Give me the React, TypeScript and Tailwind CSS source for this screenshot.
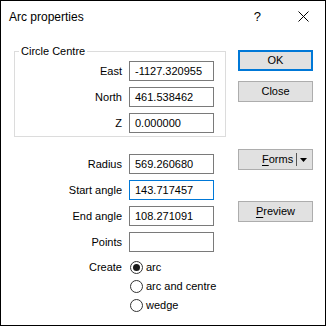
import React from "react";

const font = { fontFamily: '"Liberation Sans", Arial, sans-serif' };

function Field({ label, value, focused }: { label: string; value: string; focused?: boolean }) {
  return (
    <div className="flex items-center h-[20px]">
      <div className="w-[107px] text-right text-[11px] leading-[13px] text-black">{label}</div>
      <div
        className={
          "ml-[7px] w-[85px] h-[20px] border flex items-center pl-[5px] text-[11px] leading-[13px] text-black " +
          (focused ? "border-[#0078d7]" : "border-[#7a7a7a]")
        }
      >
        {value}
      </div>
    </div>
  );
}

function Radio({ label, checked }: { label: string; checked?: boolean }) {
  return (
    <div className="flex items-center h-[18px]">
      <div className="w-[13px] h-[13px] rounded-full border border-[#333333] bg-white flex items-center justify-center">
        {checked && <div className="w-[7px] h-[7px] rounded-full bg-[#1a1a1a]" />}
      </div>
      <span className="ml-[3px] text-[11px] leading-[13px] text-black">{label}</span>
    </div>
  );
}

function Button({ children, primary, className = "" }: { children: React.ReactNode; primary?: boolean; className?: string }) {
  return (
    <div
      className={
        "w-[75px] h-[21px] bg-[#e1e1e1] flex items-center justify-center text-[11px] leading-[13px] text-black " +
        (primary ? "border-2 border-[#0078d7] " : "border border-[#adadad] ") +
        className
      }
    >
      {children}
    </div>
  );
}

export default function App() {
  return (
    <div className="w-[326px] h-[326px] border border-black bg-white flex flex-col overflow-hidden" style={font}>
      {/* Title bar */}
      <div className="h-[31px] flex items-center pl-[8px] text-[12px] leading-[14px] text-black">
        <span>Arc properties</span>
        <span className="ml-[170px] text-[13px]">?</span>
        <svg className="ml-[37px]" width="11" height="11" viewBox="0 0 11 11">
          <path d="M0.5 0.5 L10.5 10.5 M10.5 0.5 L0.5 10.5" stroke="#000" strokeWidth="1" />
        </svg>
      </div>

      {/* Body */}
      <div className="flex flex-row">
        {/* Left column */}
        <div className="pl-[13px] w-[225px] flex flex-col">
          <fieldset className="mt-[12px] w-[212px] border border-[#dcdcdc] pt-[3px] pb-[3px]">
            <legend className="ml-[4px] px-[2px] text-[11px] leading-[14px] text-black">Circle Centre</legend>
            <div className="flex flex-col gap-[6px]">
              <Field label="East" value="-1127.320955" />
              <Field label="North" value="461.538462" />
              <Field label="Z" value="0.000000" />
            </div>
          </fieldset>

          <div className="mt-[17px] flex flex-col gap-[6px] pl-[1px]">
            <Field label="Radius" value="569.260680" />
            <Field label="Start angle" value="143.717457" focused />
            <Field label="End angle" value="108.271091" />
            <Field label="Points" value="" />
            <div className="flex items-start">
              <div className="w-[107px] h-[18px] flex items-center justify-end text-[11px] leading-[13px] text-black">
                Create
              </div>
              <div className="ml-[8px] flex flex-col gap-[1px]">
                <Radio label="arc" checked />
                <Radio label="arc and centre" />
                <Radio label="wedge" />
              </div>
            </div>
          </div>
        </div>

        {/* Right column */}
        <div className="ml-[12px] flex flex-col pt-[18px]">
          <Button primary>OK</Button>
          <Button className="mt-[10px]">Close</Button>
          <div className="mt-[47px] w-[75px] h-[21px] bg-[#e1e1e1] border border-[#adadad] flex items-center text-[11px] leading-[13px] text-black">
            <span className="ml-[23px] whitespace-nowrap">
              <span className="underline underline-offset-2">F</span>orms
            </span>
            <div className="ml-[3px] w-px h-[13px] bg-[#555555] shrink-0" />
            <svg className="ml-[3px] shrink-0" width="7" height="4" viewBox="0 0 7 4">
              <path d="M0 0 L7 0 L3.5 4 Z" fill="#000" />
            </svg>
          </div>
          <Button className="mt-[31px]">
            <span>
              <span className="underline underline-offset-2">P</span>review
            </span>
          </Button>
        </div>
      </div>
    </div>
  );
}
